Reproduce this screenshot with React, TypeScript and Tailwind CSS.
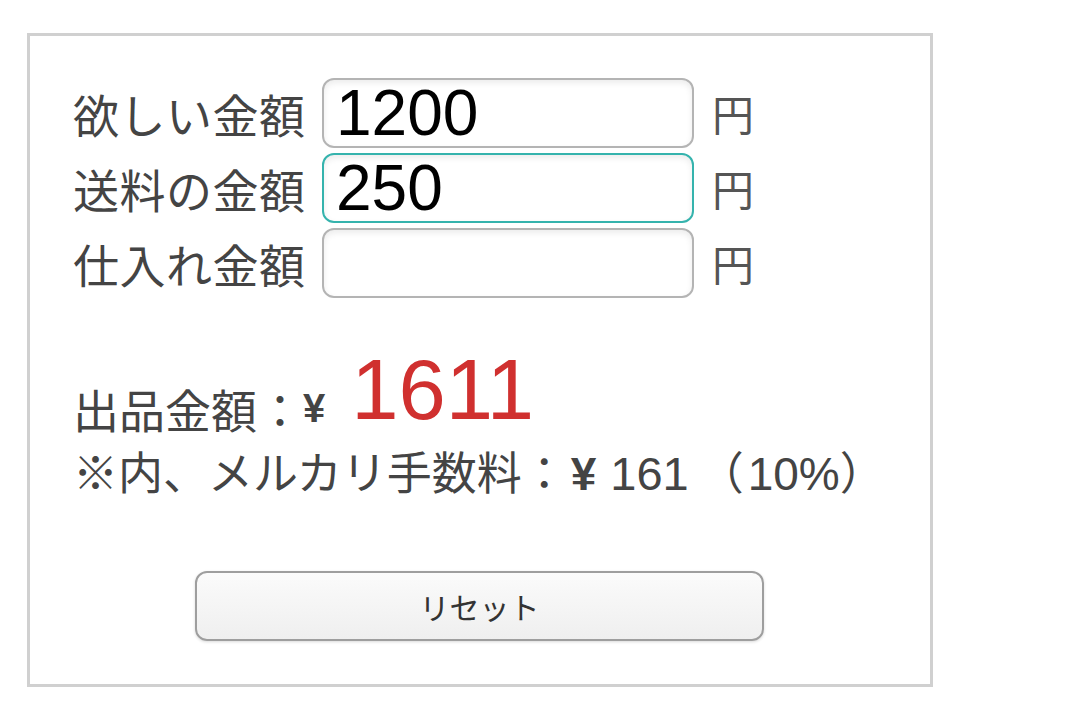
import React, { useState } from 'react';

function Row({
  label,
  value,
  focused,
  onChange,
}: {
  label: string;
  value: string;
  focused?: boolean;
  onChange: (v: string) => void;
}) {
  return (
    <div className="flex items-center h-[70px]">
      <span className="w-[249px] text-[46px] leading-none text-[#444] tracking-[0.5px]">{label}</span>
      <input
        value={value}
        onChange={(e) => onChange(e.target.value)}
        inputMode="numeric"
        className={
          "w-[372px] h-[70px] rounded-[12px] border-2 px-[12px] font-['Liberation_Sans',Arial,sans-serif] text-[64px] leading-none text-black bg-white outline-none shadow-[inset_0_3px_6px_rgba(0,0,0,0.08)] " +
          (focused ? 'border-[#35b3ad]' : 'border-[#b4b4b4]')
        }
      />
      <span className="ml-[18px] text-[42px] leading-none text-[#555]">円</span>
    </div>
  );
}

export default function App() {
  const [want, setWant] = useState('1200');
  const [ship, setShip] = useState('250');
  const [cost, setCost] = useState('');

  const reset = () => {
    setWant('');
    setShip('');
    setCost('');
  };

  return (
    <div className="w-[1080px] h-[711px] bg-white pt-[33px] pl-[27px] font-['Noto_Sans_CJK_JP','Noto_Sans',sans-serif]">
      <div className="w-[906px] h-[654px] border-[3px] border-[#d0d0d0] pt-[42px] pl-[43px]">
        <div className="flex flex-col gap-[5px]">
          <Row label="欲しい金額" value={want} onChange={setWant} />
          <Row label="送料の金額" value={ship} focused onChange={setShip} />
          <Row label="仕入れ金額" value={cost} onChange={setCost} />
        </div>

        <div className="mt-[62px] flex items-end h-[72px] text-[#444]">
          <span className="text-[46px] leading-none pb-[1px]">出品金額：</span>
          <span className="text-[40px] leading-none pb-[4px] font-['Liberation_Sans',Arial,sans-serif] font-bold">¥</span>
          <span className="ml-[26px] font-['Liberation_Sans',Arial,sans-serif] text-[85px] leading-none text-[#d0302f]">
            1611
          </span>
        </div>
        <div className="mt-[16px] flex items-baseline text-[45px] leading-none text-[#444] whitespace-nowrap">
          <span>※内、メルカリ手数料：</span>
          <span className="ml-[4px] font-['Liberation_Sans',Arial,sans-serif] font-bold text-[46px]">¥</span>
          <span className="ml-[14px] font-['Liberation_Sans',Arial,sans-serif] text-[47px]">161</span>
          <span className="ml-[10px]">（</span>
          <span className="ml-[4px] font-['Liberation_Sans',Arial,sans-serif] text-[46px]">10%</span>
          <span>）</span>
        </div>

        <button
          onClick={reset}
          className="mt-[74px] ml-[122px] w-[569px] h-[70px] rounded-[12px] border-2 border-[#9e9e9e] bg-gradient-to-b from-[#fbfbfb] to-[#efefef] shadow-[0_1px_3px_rgba(0,0,0,0.15)] text-[30px] text-[#333]"
        >
          リセット
        </button>
      </div>
    </div>
  );
}
